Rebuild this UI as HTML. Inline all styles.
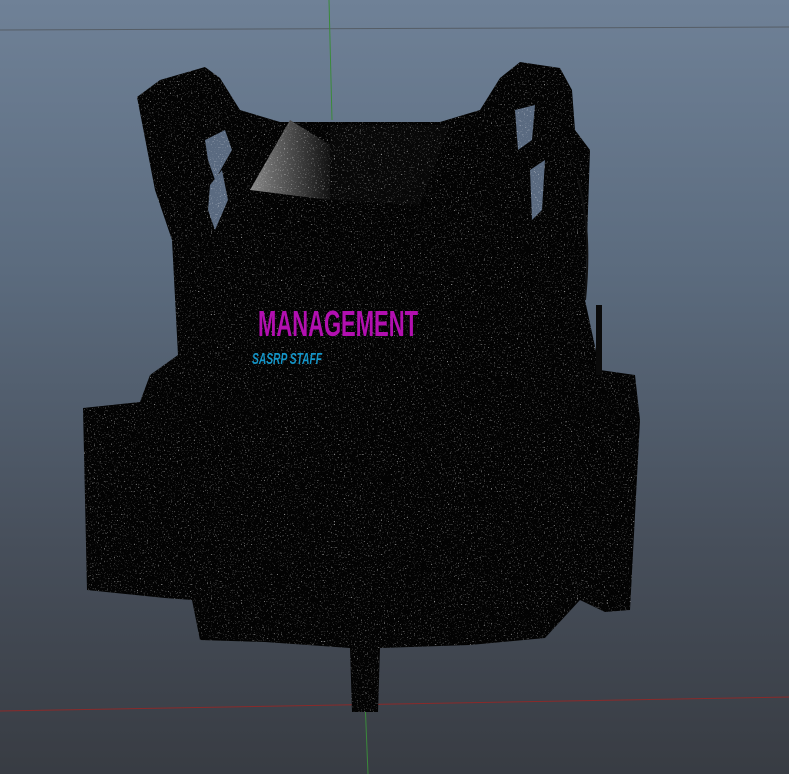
<!DOCTYPE html>
<html><head><style>
html,body{margin:0;padding:0}
body{width:789px;height:774px;overflow:hidden;background:linear-gradient(#6f8197 0%,#5b6b7e 35%,#474f5b 70%,#383c43 100%);position:relative;font-family:"Liberation Sans",sans-serif}
svg{position:absolute;left:0;top:0}
</style></head><body>
<svg width="789" height="774" viewBox="0 0 789 774">
<defs>
<filter id="n" x="0" y="0" width="100%" height="100%">
<feTurbulence type="fractalNoise" baseFrequency="0.7" numOctaves="2" seed="3"/>
<feColorMatrix values="0 0 0 0 1  0 0 0 0 1  0 0 0 0 1  0 0 0 6 -3.9"/>
<feComposite in2="SourceGraphic" operator="in"/>
</filter>
<linearGradient id="m" x1="0" x2="1"><stop offset="0" stop-color="#888"/><stop offset="1" stop-color="#111"/></linearGradient>
</defs>
<line x1="0" y1="30" x2="789" y2="27" stroke="#555d66" stroke-width="1"/>
<line x1="329" y1="0" x2="332" y2="120" stroke="#3a8a3a" stroke-width="1"/>
<line x1="365" y1="700" x2="368" y2="774" stroke="#3a8a3a" stroke-width="1"/>
<line x1="0" y1="711" x2="789" y2="697" stroke="#8a2a2a" stroke-width="1"/>
<g id="v" fill="#030303">
<path d="M137,97 L160,80 L205,67 L220,78 L240,110 L280,122 L440,122 L480,110 L500,78 L520,62 L560,68 L572,90 L575,130 L590,150 L585,300 L600,370 L635,375 L640,420 L630,610 L605,612 L580,600 L545,638 L470,645 L380,648 L378,712 L352,712 L350,648 L265,642 L200,640 L192,600 L165,598 L87,590 L83,408 L140,402 L150,375 L178,355 L172,240 L155,190 Z"/>
<path d="M205,140 L225,130 L232,150 L215,180 L208,160Z" fill="#5a6a80"/>
<path d="M210,185 L222,170 L228,200 L215,230 L208,210Z" fill="#5a6a80"/>
<path d="M515,110 L535,105 L532,140 L518,150Z" fill="#5a6a80"/>
<path d="M530,170 L545,160 L542,210 L532,220Z" fill="#5a6a80"/>
<path d="M290,120 L250,190 L330,200 L330,145 Z" fill="url(#m)"/>
<path d="M330,125 L450,125 L420,205 L330,200Z" fill="#080808"/>
</g>
<use href="#v" filter="url(#n)" opacity="0.6"/>
<path d="M578,180 Q592,230 585,300" stroke="#111" stroke-width="2" fill="none"/>
<rect x="596" y="305" width="6" height="70" fill="#0a0a0a"/>
<text x="258" y="336" font-family="Liberation Sans" font-weight="bold" font-size="36" fill="#b20fb0" textLength="160" lengthAdjust="spacingAndGlyphs">MANAGEMENT</text>
<text x="252" y="364" font-family="Liberation Sans" font-weight="bold" font-style="italic" font-size="16" fill="#1495c8" textLength="70" lengthAdjust="spacingAndGlyphs">SASRP STAFF</text>
</svg>
</body></html>
